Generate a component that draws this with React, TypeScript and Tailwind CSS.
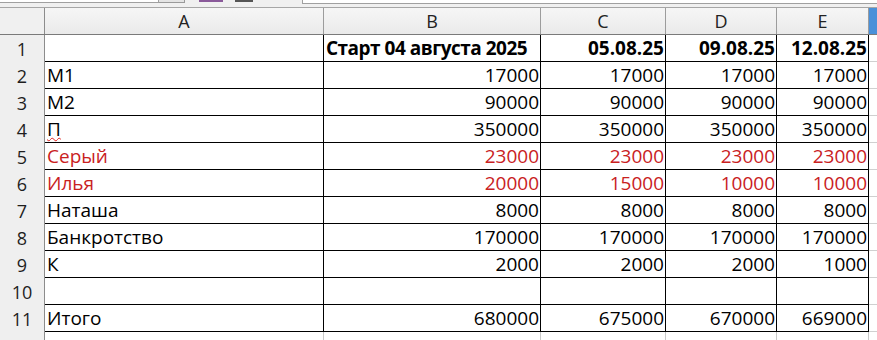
import React from "react";

type Row = { n: number; label: string; vals: string[]; red?: boolean; bold?: boolean; spell?: boolean };

const rows: Row[] = [
  { n: 1, label: "", vals: ["Старт 04 августа 2025", "05.08.25", "09.08.25", "12.08.25"], bold: true },
  { n: 2, label: "M1", vals: ["17000", "17000", "17000", "17000"] },
  { n: 3, label: "M2", vals: ["90000", "90000", "90000", "90000"] },
  { n: 4, label: "П", vals: ["350000", "350000", "350000", "350000"], spell: true },
  { n: 5, label: "Серый", vals: ["23000", "23000", "23000", "23000"], red: true },
  { n: 6, label: "Илья", vals: ["20000", "15000", "10000", "10000"], red: true },
  { n: 7, label: "Наташа", vals: ["8000", "8000", "8000", "8000"] },
  { n: 8, label: "Банкротство", vals: ["170000", "170000", "170000", "170000"] },
  { n: 9, label: "К", vals: ["2000", "2000", "2000", "1000"] },
  { n: 10, label: "", vals: ["", "", "", ""] },
  { n: 11, label: "Итого", vals: ["680000", "675000", "670000", "669000"] },
];

const valWidths = ["w-[217px]", "w-[125px]", "w-[111px]", "w-[92px]"];

export default function App() {
  return (
    <div
      className="w-[877px] h-[340px] overflow-hidden bg-white text-[#000]"
      style={{ fontFamily: '"Open Sans", "Noto Sans", sans-serif' }}
    >
      {/* toolbar remnant */}
      <div className="h-[8px] flex bg-[#f0f0f0] border-b border-[#a6a6a6]">
        <div className="w-[159px] h-[3px] bg-white border-b border-r border-[#a0a0a0]" />
        <div className="w-[26px] h-[3px] bg-[#e4e4e4] border-b border-r border-[#9a9a9a]" />
        <div className="w-[14px]" />
        <div className="w-[24px] h-[2px] bg-[#8a5a9a]" />
        <div className="w-[12px]" />
        <div className="w-[18px] h-[2px] bg-[#555]" />
        <div className="w-[49px]" />
        <div className="flex-1 h-[4px] bg-white border-b border-l border-[#a0a0a0]" />
      </div>

      {/* column header */}
      <div className="flex h-[27px] border-b border-[#7a7a7a] bg-gradient-to-b from-[#f6f6f6] to-[#eaeaea] text-[18px] text-[#222]">
        <div className="w-[45px] border-r border-[#8c8c8c] bg-[#f0f0f0]" />
        <div className="w-[279px] border-r border-[#9c9c9c] flex items-center justify-center leading-[26px]">A</div>
        <div className="w-[217px] border-r border-[#9c9c9c] flex items-center justify-center leading-[26px]">B</div>
        <div className="w-[125px] border-r border-[#9c9c9c] flex items-center justify-center leading-[26px]">C</div>
        <div className="w-[111px] border-r border-[#9c9c9c] flex items-center justify-center leading-[26px]">D</div>
        <div className="w-[92px] border-r border-[#9c9c9c] flex items-center justify-center leading-[26px]">E</div>
        <div className="flex-1 bg-[#4a90d9]" />
      </div>

      {rows.map((r) => (
        <div key={r.n} className="flex h-[27px] text-[19px] leading-[26px]">
          <div className="w-[45px] border-r border-[#8c8c8c] bg-[#efefef] text-[18px] text-[#1e1e1e] flex items-center justify-center">
            {r.n}
          </div>
          <div
            className={`w-[279px] border-r border-b border-black pl-[2px] whitespace-nowrap ${r.red ? "text-[#c9211e]" : ""} ${r.bold ? "font-bold" : ""}`}
          >
            {r.spell ? (
              <span className="underline decoration-wavy decoration-[#e0201c] decoration-1 underline-offset-[1px]">{r.label}</span>
            ) : (
              r.label
            )}
          </div>
          {r.vals.map((v, i) => (
            <div
              key={i}
              className={`${valWidths[i]} border-r border-b border-black whitespace-nowrap overflow-hidden ${
                r.n === 1 && i === 0 ? "text-left pl-[2px] tracking-[-0.5px]" : "text-right pr-[1px]"
              } ${r.red ? "text-[#c9211e]" : ""} ${r.bold ? "font-bold" : ""}`}
            >
              {v}
            </div>
          ))}
          <div className="flex-1 border-b border-[#d0d0d0]" />
        </div>
      ))}

      {/* row 12, partially visible */}
      <div className="flex h-[20px]">
        <div className="w-[45px] border-r border-[#8c8c8c] bg-[#efefef]" />
        <div className="w-[279px] border-r border-[#c8c8c8]" />
        <div className="w-[217px] border-r border-[#c8c8c8]" />
        <div className="w-[125px] border-r border-[#c8c8c8]" />
        <div className="w-[111px] border-r border-[#c8c8c8]" />
        <div className="w-[92px] border-r border-[#c8c8c8]" />
        <div className="flex-1" />
      </div>
    </div>
  );
}
